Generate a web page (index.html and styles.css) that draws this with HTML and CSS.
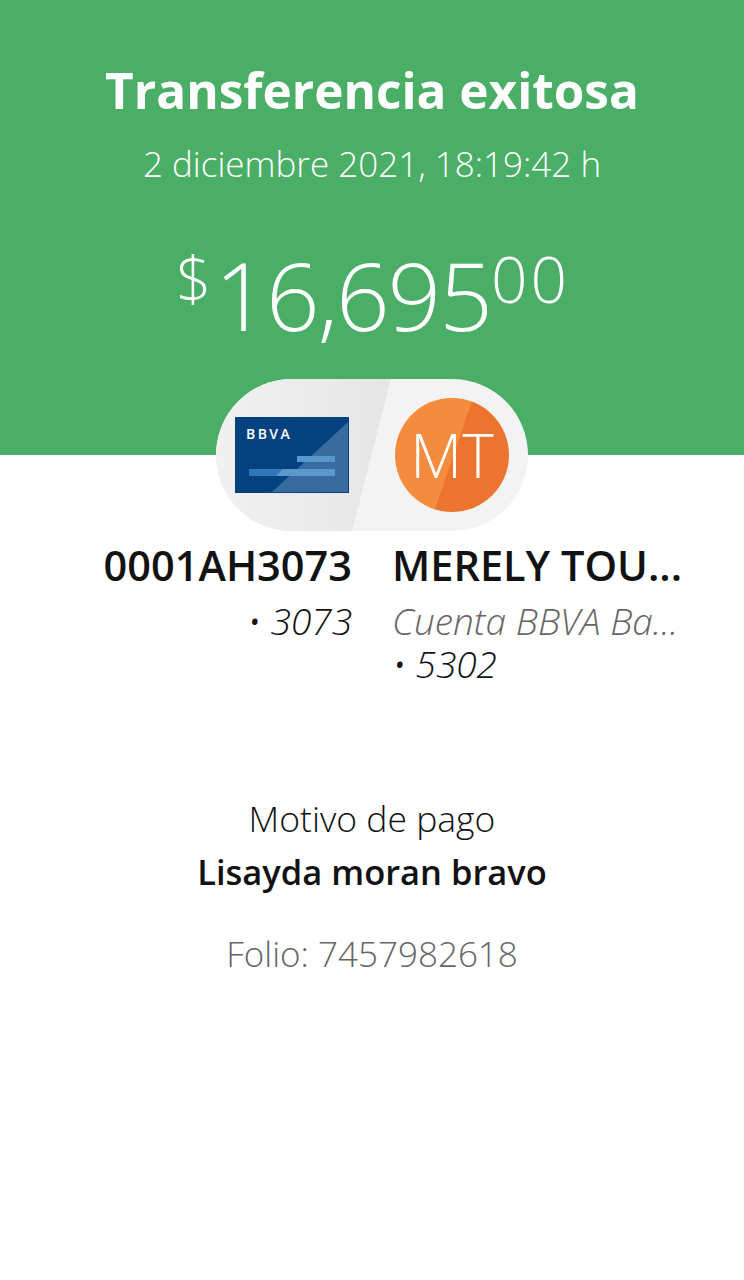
FILE: index.html
```html
<!DOCTYPE html>
<html lang="es">
<head>
<meta charset="utf-8">
<title>Transferencia exitosa</title>
<link rel="stylesheet" href="styles.css">
</head>
<body>
<header class="hero">
  <h1 class="title">Transferencia exitosa</h1>
  <p class="date">2 diciembre 2021, 18:19:42 h</p>
  <p class="amount"><span class="sup cur">$</span>16,695<span class="sup cents">00</span></p>
</header>
<div class="pill">
  <svg class="pill-bg" viewBox="0 0 312 152" aria-hidden="true">
    <defs><linearGradient id="pillLeft"><stop offset="0" stop-color="#f1f1f1"/><stop offset="1" stop-color="#e6e6e6"/></linearGradient></defs>
    <rect width="312" height="152" fill="#f3f3f3"/>
    <polygon points="0,0 175,0 136,152 0,152" fill="url(#pillLeft)"/>
  </svg>
  <div class="card">
    <svg class="card-art" viewBox="0 0 114 76" aria-hidden="true">
      <rect width="114" height="76" fill="#04417f"/>
      <polygon points="113,5 37,75 113,75" fill="#386c9f"/>
      <rect x="62" y="39" width="38" height="6" fill="#4486c2"/>
      <rect x="14" y="52" width="86" height="7" fill="#2e78b8"/>
      <polygon points="62,39 100,39 100,45 62,45" fill="#5b97cb"/>
      <polygon points="48,52 100,52 100,59 41,59" fill="#5b97cb"/>
    </svg>
    <span class="card-logo">BBVA</span>
  </div>
  <div class="avatar">MT</div>
</div>
<section class="accounts">
  <div class="acct acct-from">
    <div class="acct-name">0001AH3073</div>
    <div class="acct-num">• 3073</div>
  </div>
  <div class="acct">
    <div class="acct-name">MERELY TOU...</div>
    <div class="acct-type">Cuenta BBVA Ba...</div>
    <div class="acct-num">• 5302</div>
  </div>
</section>
<section class="details">
  <p class="label">Motivo de pago</p>
  <p class="reason">Lisayda moran bravo</p>
  <p class="folio">Folio: 7457982618</p>
</section>
</body>
</html>
```
FILE: styles.css
```css
* { box-sizing: border-box; }
html, body { margin: 0; padding: 0; }
body { width: 744px; height: 1280px; background: #fff; font-family: "Open Sans", Roboto, "Liberation Sans", sans-serif; overflow: hidden; color: #121212; }
p, h1 { margin: 0; }
.hero { height: 455px; background: #4aae66; color: #fff; text-align: center; padding-top: 60px; }
.title { font-size: 49.5px; line-height: 60px; font-weight: 700; }
.date { font-size: 35px; line-height: 40px; font-weight: 300; margin-top: 24px; }
.amount { font-size: 94px; line-height: 112px; font-weight: 300; margin-top: 55px; padding-left: 2px; letter-spacing: -2px; }
.sup { vertical-align: top; line-height: 1; position: relative; }
.cur { font-size: 62px; top: 8px; letter-spacing: 0; margin-right: 3px; }
.cents { font-size: 64px; top: 8px; letter-spacing: 3px; }
.pill { position: relative; width: 312px; height: 152px; margin: -76px auto 0; border-radius: 76px; overflow: hidden; display: flex; align-items: center; padding-left: 19px; }
.pill-bg { position: absolute; inset: 0; width: 100%; height: 100%; }
.card { position: relative; width: 114px; height: 76px; flex: none; }
.card-art { display: block; width: 114px; height: 76px; }
.card-logo { position: absolute; left: 11px; top: 8px; font-size: 14px; line-height: 18px; font-weight: 600; letter-spacing: 2.4px; color: #fff; }
.avatar { position: relative; width: 114px; height: 114px; flex: none; margin-left: 46px; border-radius: 50%; background: linear-gradient(109deg, #f58b3d 0 51%, #ec742e 51% 100%); color: #fff; font-size: 60px; font-weight: 300; line-height: 114px; text-align: center; }
.accounts { display: grid; grid-template-columns: 290px 290px; column-gap: 40px; padding: 12px 62px 0; }
.acct { min-width: 0; white-space: nowrap; }
.acct-from { text-align: right; }
.acct-name { font-size: 41.5px; line-height: 44px; font-weight: 600; }
.acct-num, .acct-type { font-size: 37px; line-height: 43px; font-weight: 300; font-style: italic; }
.acct-num { color: #121212; }
.acct-name + div { margin-top: 12px; }
.acct-type { color: #666; }
.details { text-align: center; margin-top: 112px; }
.label { font-size: 35.5px; line-height: 42px; font-weight: 300; }
.reason { font-size: 34.5px; line-height: 42px; font-weight: 600; margin-top: 12px; }
.folio { font-size: 35px; line-height: 42px; font-weight: 300; color: #666; margin-top: 40px; }
```
